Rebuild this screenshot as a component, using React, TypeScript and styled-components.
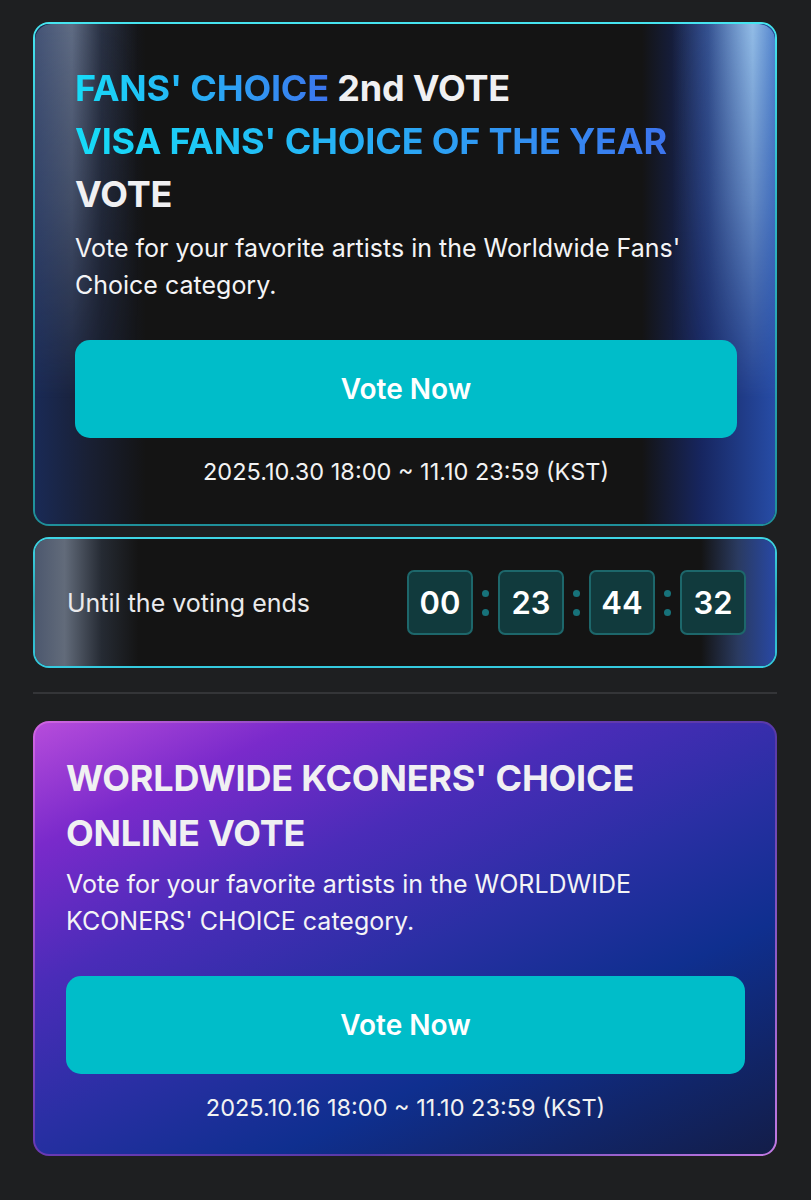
import React from 'react';
import styled, { createGlobalStyle, css } from 'styled-components';

const GlobalStyle = createGlobalStyle`
    * { box-sizing: border-box; }
    body {
        margin: 0;
        background: #1e1f21;
        font-family: Inter, "Noto Sans", sans-serif;
        color: #ffffff;
    }
`;

export const Page = styled.main`
    display: flex;
    flex-direction: column;
    padding: 22px 34px 40px 33px;
`;

type Variant = 'fans' | 'kconers';

const fansCard = css`
    border: 2px solid transparent;
    background:
        linear-gradient(90deg,
            rgba(30, 60, 140, 0.55) 0%,
            rgba(35, 55, 115, 0.35) 7%,
            rgba(20, 20, 20, 0) 15%,
            rgba(20, 20, 20, 0) 82%,
            rgba(25, 55, 170, 0.5) 90%,
            rgba(45, 95, 215, 0.75) 100%) padding-box,
        linear-gradient(#141414, #141414) padding-box,
        linear-gradient(180deg, #46e4f0 0%, #2fb7c6 35%, #1f8f9a 100%) border-box;

    &::before {
        content: '';
        position: absolute;
        inset: 0;
        border-radius: inherit;
        pointer-events: none;
        background: linear-gradient(90deg,
            rgba(110, 125, 150, 0.5) 0%,
            rgba(165, 180, 200, 0.5) 5%,
            rgba(85, 100, 125, 0.28) 9%,
            transparent 14%,
            transparent 86%,
            rgba(110, 160, 225, 0.35) 91%,
            rgba(175, 220, 252, 0.8) 97%,
            rgba(120, 180, 240, 0.55) 100%);
        -webkit-mask-image: linear-gradient(180deg, #000 0%, rgba(0, 0, 0, 0.6) 35%, transparent 75%);
        mask-image: linear-gradient(180deg, #000 0%, rgba(0, 0, 0, 0.6) 35%, transparent 75%);
    }
`;

const kconersCard = css`
    border: 2px solid transparent;
    background:
        linear-gradient(155deg,
            #b64cdb 0%,
            #7a2acb 16%,
            #4a2cb8 34%,
            #2a2fa4 52%,
            #0f2f8f 70%,
            #112568 86%,
            #131d48 100%) padding-box,
        linear-gradient(135deg, #d065e2 0%, #6b3ab4 35%, #5a3aa8 65%, #c27ae4 100%) border-box;
`;

export const Card = styled.section<{ $variant: Variant }>`
    position: relative;
    border-radius: 16px;
    overflow: hidden;
    display: flex;
    flex-direction: column;
    ${p => (p.$variant === 'fans' ? fansCard : kconersCard)}
    padding: ${p => (p.$variant === 'fans' ? '38px 38px 36px 40px' : '28px 30px 30px 31px')};

    & > * {
        position: relative;
    }
`;

export const Title = styled.h2<{ $lineHeight: number }>`
    margin: 0;
    font-size: 36px;
    font-weight: 700;
    line-height: ${p => p.$lineHeight}px;
    letter-spacing: -0.2px;
    color: #f0f0f2;
`;

export const Line = styled.span`
    display: block;
`;

export const Glow = styled.span`
    background: linear-gradient(90deg, #16dcf8 0%, #2aa8f4 55%, #3c74ee 100%);
    -webkit-background-clip: text;
    background-clip: text;
    color: transparent;
`;

export const Description = styled.p<{ $gap: number }>`
    margin: ${p => p.$gap}px 0 0;
    font-size: 25px;
    font-weight: 400;
    line-height: 37px;
    color: #f4f4f6;
`;

export const VoteButton = styled.button`
    margin-top: 36px;
    height: 98px;
    border: none;
    border-radius: 15px;
    background: #00bdc9;
    color: #ffffff;
    font-family: inherit;
    font-size: 28px;
    font-weight: 600;
    cursor: pointer;
`;

export const Period = styled.p`
    margin: 18px 0 0;
    font-size: 23.5px;
    line-height: 32px;
    text-align: center;
    color: #f2f2f2;
`;

export const CountdownCard = styled.section`
    position: relative;
    margin-top: 11px;
    border-radius: 16px;
    overflow: hidden;
    display: flex;
    align-items: center;
    justify-content: space-between;
    padding: 31px 29px 31px 32px;
    border: 2px solid transparent;
    background:
        linear-gradient(90deg,
            rgba(95, 110, 140, 0.75) 0%,
            rgba(150, 165, 190, 0.6) 4%,
            rgba(70, 85, 110, 0.35) 9%,
            rgba(20, 20, 20, 0) 14%,
            rgba(20, 20, 20, 0) 90%,
            rgba(60, 90, 160, 0.55) 95%,
            rgba(45, 85, 200, 0.8) 100%) padding-box,
        linear-gradient(#141414, #141414) padding-box,
        linear-gradient(180deg, #3fd6e6 0%, #2aa7b5 50%, #35cbe0 100%) border-box;
`;

export const CountdownLabel = styled.span`
    font-size: 25px;
    color: #eaeaec;
`;

export const Clock = styled.div`
    display: flex;
    align-items: center;
`;

export const Digit = styled.span`
    width: 66px;
    height: 65px;
    display: flex;
    align-items: center;
    justify-content: center;
    border: 2px solid #1d676b;
    border-radius: 7px;
    background: #113a3d;
    font-size: 31px;
    font-weight: 600;
    color: #ffffff;
`;

export const Colon = styled.span`
    width: 25px;
    display: flex;
    flex-direction: column;
    align-items: center;
    gap: 12px;

    &::before,
    &::after {
        content: '';
        width: 7px;
        height: 7px;
        border-radius: 50%;
        background: #17727a;
    }
`;

export const Divider = styled.hr`
    margin: 24px 0 27px;
    border: none;
    height: 2px;
    background: #343538;
`;

const timeLeft = ['00', '23', '44', '32'];

export default function App() {
    return (
        <>
            <GlobalStyle />
            <Page>
                <Card $variant="fans">
                    <Title $lineHeight={53}>
                        <Line><Glow>FANS' CHOICE</Glow> 2nd VOTE</Line>
                        <Line><Glow>VISA FANS' CHOICE OF THE YEAR</Glow></Line>
                        <Line>VOTE</Line>
                    </Title>
                    <Description $gap={9}>
                        Vote for your favorite artists in the Worldwide Fans' Choice category.
                    </Description>
                    <VoteButton>Vote Now</VoteButton>
                    <Period>2025.10.30 18:00 ~ 11.10 23:59 (KST)</Period>
                </Card>

                <CountdownCard>
                    <CountdownLabel>Until the voting ends</CountdownLabel>
                    <Clock>
                        {timeLeft.map((t, idx) => (
                            <React.Fragment key={idx}>
                                {idx > 0 && <Colon />}
                                <Digit>{t}</Digit>
                            </React.Fragment>
                        ))}
                    </Clock>
                </CountdownCard>

                <Divider />

                <Card $variant="kconers">
                    <Title $lineHeight={55}>
                        <Line>WORLDWIDE KCONERS' CHOICE</Line>
                        <Line>ONLINE VOTE</Line>
                    </Title>
                    <Description $gap={5}>
                        Vote for your favorite artists in the WORLDWIDE KCONERS' CHOICE category.
                    </Description>
                    <VoteButton>Vote Now</VoteButton>
                    <Period>2025.10.16 18:00 ~ 11.10 23:59 (KST)</Period>
                </Card>
            </Page>
        </>
    );
}
